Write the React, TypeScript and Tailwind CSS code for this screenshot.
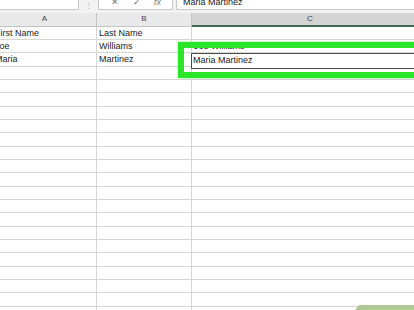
import React from "react";

const ROWS: [string, string, string][] = [
  ["First Name", "Last Name", ""],
  ["Joe", "Williams", "Joe Williams"],
  ["Maria", "Martinez", ""],
];

const TOTAL_ROWS = 22;

export default function App() {
  const rows = Array.from({ length: TOTAL_ROWS }, (_, i) => ROWS[i] ?? ["", "", ""]);

  return (
    <div
      className="relative h-[310px] w-[414px] overflow-hidden bg-white text-[#222]"
      style={{ fontFamily: '"Liberation Sans", Arial, sans-serif' }}
    >
      {/* formula bar, cut off at the top */}
      <div className="flex h-[13.3px] items-start bg-[#f2f2f2]">
        <div className="h-[10px] w-[79px] border-b border-r border-[#c8c8c8] bg-white" />
        <div className="flex h-[10px] w-[19px] items-end justify-center overflow-hidden">
          <span className="mb-[1px] text-[7px] leading-[7px] text-[#999]">⋮</span>
        </div>
        <div className="flex h-[10px] w-[75px] items-end overflow-hidden border-b border-l border-r border-[#c8c8c8] bg-white text-[#777]">
          <span className="ml-[12px] mb-[2px] text-[9px] leading-[9px]">✕</span>
          <span className="ml-[14px] mb-[2px] text-[9px] leading-[9px]">✓</span>
          <span className="ml-[13px] mb-[2px] text-[9px] italic leading-[9px]">fx</span>
        </div>
        <div className="ml-[3px] flex h-[10px] flex-1 items-end overflow-hidden border-b border-l border-[#c8c8c8] bg-white">
          <span className="ml-[6px] mb-[1px] text-[9px] leading-[12px] text-[#222]">Maria Martinez</span>
        </div>
      </div>

      {/* sheet */}
      <div className="ml-[-7px] grid grid-cols-[104px_95px_236px]">
        <div className="flex h-[13.4px] items-center justify-center border-b border-r border-[#c4c4c4] bg-[#e9e9e9] text-[8px] text-[#444]">
          A
        </div>
        <div className="flex h-[13.4px] items-center justify-center border-b border-r border-[#c4c4c4] bg-[#e9e9e9] text-[8px] text-[#444]">
          B
        </div>
        <div className="flex h-[13.4px] items-center justify-center border-b-2 border-[#3f6b55] bg-[#d4d4d4] text-[8px] text-[#444]">
          C
        </div>
        {rows.map((r, i) => (
          <React.Fragment key={i}>
            <div className="h-[13.33px] whitespace-nowrap border-b border-r border-[#d6d6d6] pl-[2px] text-[9px] leading-[13px]">
              {r[0]}
            </div>
            <div className="h-[13.33px] whitespace-nowrap border-b border-r border-[#d6d6d6] pl-[2px] text-[9px] leading-[13px]">
              {r[1]}
            </div>
            <div className="h-[13.33px] whitespace-nowrap border-b border-[#d6d6d6] pl-[2px] text-[9px] leading-[13px]">
              {r[2]}
            </div>
          </React.Fragment>
        ))}
      </div>

      {/* cell being edited */}
      <div className="absolute left-[191px] top-[52.5px] h-[16px] w-[240px] border-[1.5px] border-[#4a4a4a] bg-white pl-[1px] text-[9px] leading-[13px]">
        Maria Martinez
      </div>

      {/* green highlight */}
      <div className="absolute left-[178px] top-[42px] h-[36px] w-[250px] border-[6px] border-[#2be52b] shadow-[0_0_2px_#7ef07e]" />

      {/* corner tab */}
      <div className="absolute bottom-0 right-0 h-[5px] w-[58px] rounded-tl-[6px] bg-[#aec896]" />
    </div>
  );
}
